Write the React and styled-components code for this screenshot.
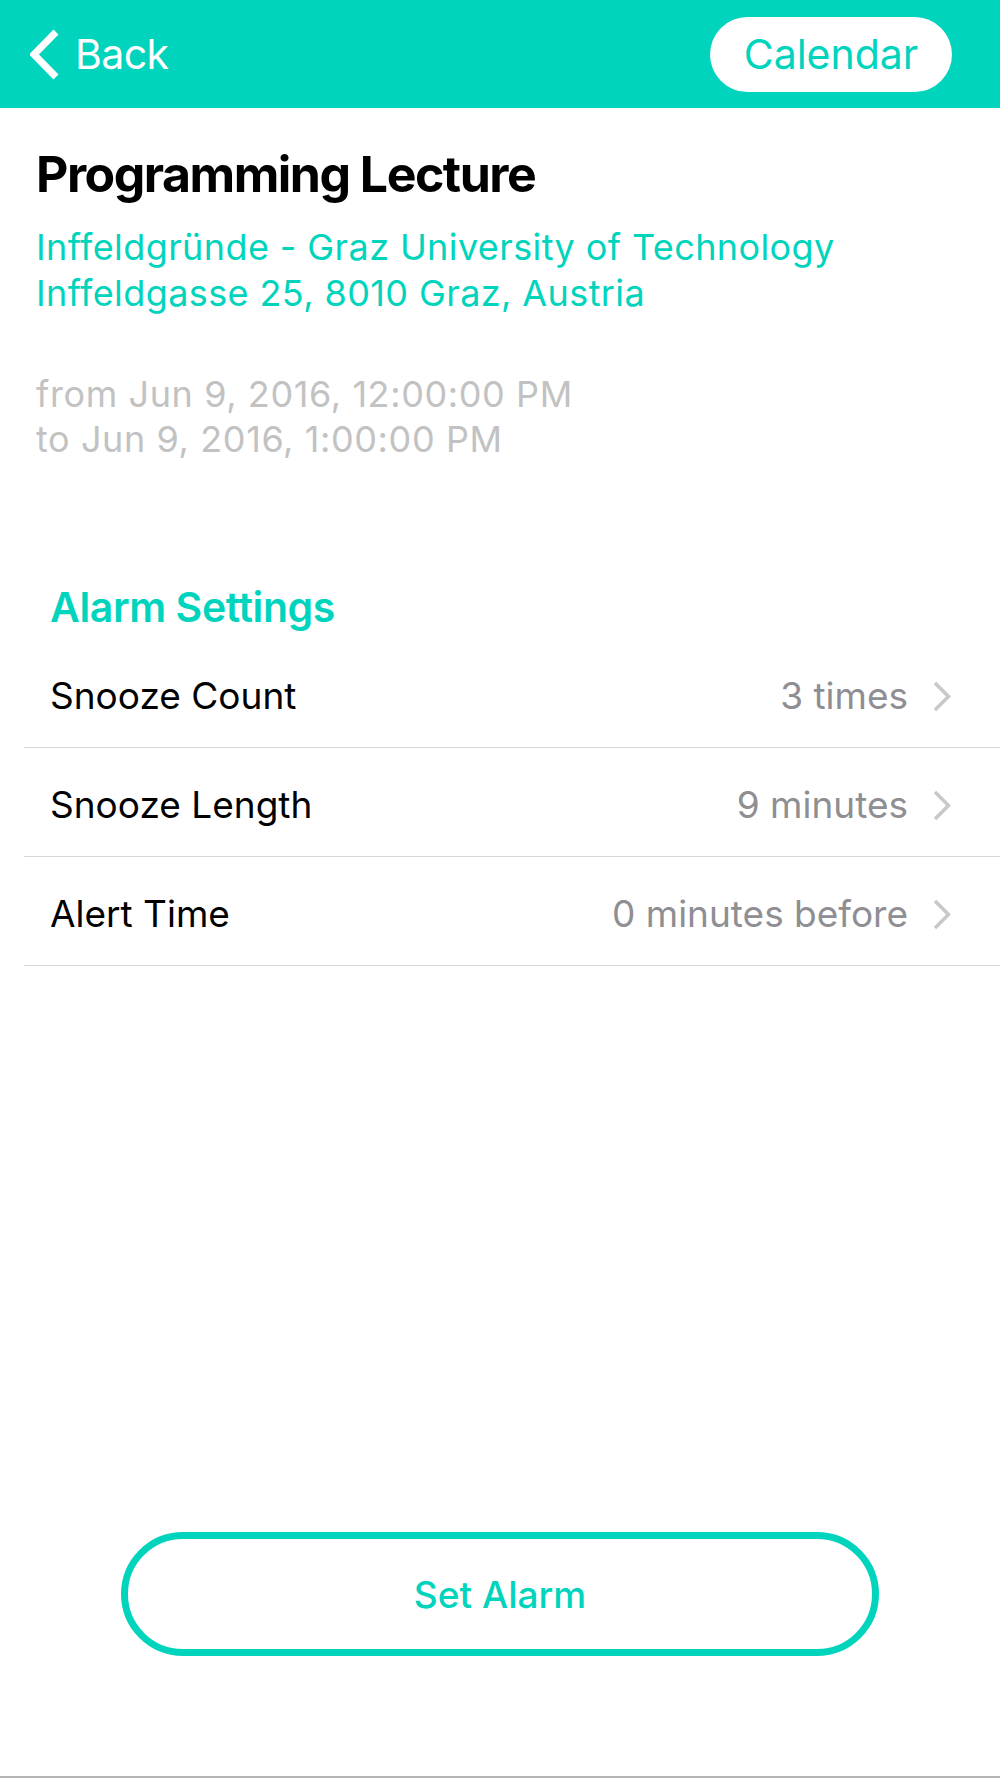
import React from "react";
import styled, { createGlobalStyle } from "styled-components";

const TEAL = "#00d4bd";

const GlobalStyle = createGlobalStyle`
  html, body {
    margin: 0;
    padding: 0;
    background: #fff;
  }
  body {
    font-family: Inter, "Noto Sans", "Liberation Sans", sans-serif;
    -webkit-font-smoothing: antialiased;
  }
`;

const Screen = styled.div`
  display: flex;
  flex-direction: column;
  min-height: 100vh;
  box-sizing: border-box;
  border-bottom: 2px solid #b4b4b4;
`;

const NavBar = styled.header`
  height: 108px;
  background: ${TEAL};
  display: flex;
  align-items: center;
  justify-content: space-between;
  padding: 0 48px 0 30px;
  box-sizing: border-box;
`;

const BackButton = styled.button`
  display: flex;
  align-items: center;
  gap: 15px;
  background: none;
  border: 0;
  padding: 0;
  color: #fff;
  font-family: inherit;
  font-size: 41px;
  line-height: 50px;
  letter-spacing: -0.6px;
  cursor: pointer;
`;

const PillButton = styled.button`
  height: 75px;
  width: 242px;
  border-radius: 38px;
  border: 0;
  background: #fff;
  color: ${TEAL};
  font-family: inherit;
  font-size: 41px;
  line-height: 50px;
  padding: 0;
  cursor: pointer;
`;

const Details = styled.section`
  padding: 36px 30px 0 36px;
`;

const Title = styled.h1`
  margin: 0;
  font-size: 50px;
  line-height: 60px;
  font-weight: 700;
  color: #000;
  letter-spacing: -1.5px;
`;

const Address = styled.p`
  margin: 20px 0 0;
  font-size: 36px;
  line-height: 46px;
  color: ${TEAL};
  letter-spacing: 0.4px;
`;

const Dates = styled.p`
  margin: 56px 0 0;
  font-size: 36px;
  line-height: 45px;
  color: #c2c2c2;
  letter-spacing: 0.6px;
`;

const SectionTitle = styled.h2`
  margin: 120px 0 0;
  padding-left: 50px;
  font-size: 41px;
  line-height: 50px;
  font-weight: 600;
  color: ${TEAL};
  letter-spacing: -0.4px;
`;

const SettingsList = styled.ul`
  list-style: none;
  margin: 7px 0 0 24px;
  padding: 0;
`;

const SettingRow = styled.li`
  height: 109px;
  box-sizing: border-box;
  display: flex;
  align-items: center;
  padding: 6px 49px 0 26px;
  border-bottom: 1px solid #d6d6d8;
  font-size: 37px;
  line-height: 44px;
`;

const Label = styled.span`
  flex: 1;
  color: #000;
`;

const Value = styled.span`
  color: #8e8e93;
  margin-right: 25px;
`;

const Spacer = styled.div`
  flex: 1;
`;

const Footer = styled.div`
  display: flex;
  justify-content: center;
  padding-bottom: 120px;
`;

const AlarmButton = styled.button`
  width: 758px;
  height: 124px;
  border: 7px solid ${TEAL};
  border-radius: 62px;
  background: #fff;
  color: ${TEAL};
  font-family: inherit;
  font-size: 37px;
  font-weight: 500;
  cursor: pointer;
`;

function BackChevron() {
  return (
    <svg width="30" height="51" viewBox="0 0 30 51" fill="none">
      <polyline
        points="26,3 4,25.5 26,48"
        stroke="#fff"
        strokeWidth="7"
        strokeLinejoin="miter"
      />
    </svg>
  );
}

function RowChevron() {
  return (
    <svg width="18" height="31" viewBox="0 0 18 31" fill="none">
      <polyline
        points="2,2 15.5,15.5 2,29"
        stroke="#c7c7cc"
        strokeWidth="3.5"
      />
    </svg>
  );
}

const settings = [
  { label: "Snooze Count", value: "3 times" },
  { label: "Snooze Length", value: "9 minutes" },
  { label: "Alert Time", value: "0 minutes before" },
];

export default function App() {
  return (
    <Screen>
      <GlobalStyle />
      <NavBar>
        <BackButton>
          <BackChevron />
          Back
        </BackButton>
        <PillButton>Calendar</PillButton>
      </NavBar>

      <Details>
        <Title>Programming Lecture</Title>
        <Address>
          Inffeldgründe - Graz University of Technology
          <br />
          Inffeldgasse 25, 8010 Graz, Austria
        </Address>
        <Dates>
          from Jun 9, 2016, 12:00:00 PM
          <br />
          to Jun 9, 2016, 1:00:00 PM
        </Dates>
      </Details>

      <SectionTitle>Alarm Settings</SectionTitle>
      <SettingsList>
        {settings.map((item) => (
          <SettingRow key={item.label}>
            <Label>{item.label}</Label>
            <Value>{item.value}</Value>
            <RowChevron />
          </SettingRow>
        ))}
      </SettingsList>

      <Spacer />
      <Footer>
        <AlarmButton>Set Alarm</AlarmButton>
      </Footer>
    </Screen>
  );
}
